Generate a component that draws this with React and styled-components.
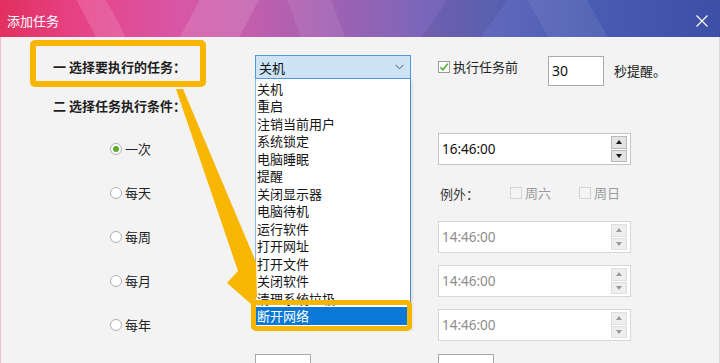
import React from 'react';
import styled, { createGlobalStyle } from 'styled-components';

const Global = createGlobalStyle`
  html, body { margin: 0; padding: 0; width: 720px; height: 363px; overflow: hidden; background: #f3f3f3; }
  body { font-family: "Noto Sans CJK SC", "Noto Sans", sans-serif; -webkit-font-smoothing: antialiased; }
  #root { width: 720px; height: 363px; }
  * { box-sizing: border-box; }
`;

const Dialog = styled.div`
  position: relative;
  width: 720px;
  height: 363px;
  overflow: hidden;
  background: #f3f3f3;
  display: flex;
  flex-direction: column;
`;

const TitleBar = styled.div`
  height: 37px;
  flex: none;
  display: flex;
  align-items: center;
  justify-content: space-between;
  padding: 4px 12px 0 7px;
  background:
    linear-gradient(62deg, rgba(255,255,255,0) 0 13%, rgba(255,255,255,0.13) 13% 17%, rgba(255,255,255,0) 17%),
    linear-gradient(118deg, rgba(255,255,255,0) 0 27%, rgba(255,255,255,0.12) 27% 35%, rgba(255,255,255,0) 35%),
    linear-gradient(70deg, rgba(255,255,255,0) 0 41%, rgba(255,255,255,0.08) 41% 47%, rgba(255,255,255,0) 47%),
    linear-gradient(125deg, rgba(0,0,40,0) 0 60%, rgba(0,0,40,0.08) 60% 68%, rgba(0,0,40,0) 68%),
    linear-gradient(60deg, rgba(255,255,255,0) 0 74%, rgba(255,255,255,0.07) 74% 82%, rgba(255,255,255,0) 82%),
    linear-gradient(90deg, #e2305f 0%, #e6448a 12%, #d757a6 25%, #c25fae 35%, #9e61b3 47%, #7d66b9 58%, #5f68bb 69%, #4a5cb2 82%, #3c4ea6 100%);
`;

const Title = styled.span`
  color: #fff;
  font-size: 13px;
  line-height: 18px;
`;

const CloseIcon = styled.svg`
  width: 12px;
  height: 12px;
  display: block;
`;

const Body = styled.div`
  flex: 1;
  border-left: 1px solid #ecbfd0;
  border-right: 1px solid #dadada;
  padding-top: 18px;
`;

const Row = styled.div`
  display: grid;
  grid-template-columns: 254px 183px 1fr;
  align-items: ${p => p.$align || 'center'};
  height: ${p => p.$h}px;
`;

const SectionTitle = styled.div`
  padding-left: 52px;
  font-size: 13px;
  font-weight: 700;
  color: #1e1e1e;
  line-height: ${p => p.$lh || 24}px;
  margin-top: ${p => p.$mt || 0}px;
  white-space: nowrap;
`;

const SelectWrap = styled.div`
  position: relative;
  width: 156px;
  height: 24px;
`;

const SelectHead = styled.div`
  height: 24px;
  border: 1px solid #5596d6;
  background: #cde4f7;
  display: flex;
  align-items: center;
  justify-content: space-between;
  padding: 0 6px 0 3px;
  font-size: 13px;
  color: #111;
`;

const DropList = styled.div`
  position: absolute;
  top: 100%;
  left: 0;
  width: 156px;
  background: #fff;
  border-left: 1px solid #8dbbe6;
  border-right: 1px solid #4a8fd4;
  border-bottom: 1px solid #8dbbe6;
  padding: 0.5px 0 2px;
  z-index: 2;
  box-shadow: 2px 2px 2px rgba(0,0,0,0.08);
`;

const DropItem = styled.div`
  height: 17.5px;
  line-height: 17.5px;
  font-size: 13px;
  padding-left: ${p => (p.$selected ? 1 : 1)}px;
  margin-right: ${p => (p.$selected ? 3 : 0)}px;
  color: ${p => (p.$selected ? '#fff' : '#161616')};
  background: ${p => (p.$selected ? '#0a78d6' : 'transparent')};
  white-space: nowrap;
`;

const Right = styled.div`
  display: flex;
  align-items: ${p => p.$align || 'center'};
`;

const CheckBox = styled.span`
  width: 12px;
  height: 12px;
  flex: none;
  border: 1px solid ${p => (p.$disabled ? '#d3d3d3' : '#9a9a9a')};
  background: ${p => (p.$disabled ? '#f4f4f4' : '#fff')};
  display: inline-flex;
  align-items: center;
  justify-content: center;
`;

const CheckText = styled.span`
  font-size: 13px;
  line-height: 24px;
  margin-left: 3px;
  color: ${p => (p.$disabled ? '#9b9b9b' : '#222')};
`;

const PlainText = styled.span`
  font-size: 13px;
  line-height: 24px;
  color: #222;
  margin-left: ${p => p.$ml || 0}px;
  margin-top: ${p => p.$mt || 0}px;
`;

const NumBox = styled.div`
  width: 56px;
  height: ${p => p.$h || 30}px;
  margin-left: ${p => p.$ml || 0}px;
  margin-top: ${p => p.$mt || 0}px;
  border: 1px solid #a9a9a9;
  background: #fff;
  font-family: "Noto Sans", sans-serif;
  font-size: 14px;
  line-height: 28px;
  padding-left: 3px;
  color: #111;
`;

const Options = styled.div`
  display: grid;
  grid-template-columns: 254px 183px 1fr;
  grid-auto-rows: 32px;
  row-gap: 12px;
  align-items: center;
  margin-top: 17px;
`;

const RadioLabel = styled.div`
  padding-left: 109px;
  display: flex;
  align-items: center;
  font-size: 13px;
  color: #222;
  line-height: 20px;
`;

const RadioCircle = styled.span`
  width: 12px;
  height: 12px;
  border-radius: 50%;
  border: 1px solid #b0b0b0;
  background: #fff;
  margin-right: 3px;
  display: inline-flex;
  align-items: center;
  justify-content: center;
  &::after {
    content: '';
    display: ${p => (p.$checked ? 'block' : 'none')};
    width: 6px;
    height: 6px;
    border-radius: 50%;
    background: #5bab2c;
  }
`;

const TimeBox = styled.div`
  width: 193px;
  height: 32px;
  border: 1px solid ${p => (p.$disabled ? '#d6d6d6' : '#c4c4c4')};
  background: #fff;
  display: flex;
  align-items: center;
  padding: 0 2px 0 3px;
`;

const TimeText = styled.span`
  flex: 1;
  font-family: "Noto Sans", sans-serif;
  font-size: 13.5px;
  color: ${p => (p.$disabled ? '#8c8c8c' : '#111')};
`;

const Spinner = styled.div`
  display: flex;
  flex-direction: column;
  gap: 1px;
  margin-right: 1px;
`;

const SpinBtn = styled.div`
  width: 16px;
  height: 12.5px;
  background: ${p => (p.$disabled ? '#eeeeee' : '#e4e4e4')};
  border: 1px solid ${p => (p.$disabled ? '#dedede' : '#b9b9b9')};
  display: flex;
  align-items: center;
  justify-content: center;
  &::after {
    content: '';
    width: 0;
    height: 0;
    border-left: 3.5px solid transparent;
    border-right: 3.5px solid transparent;
    ${p => (p.$down ? 'border-top' : 'border-bottom')}: 4px solid ${p => (p.$disabled ? '#9a9a9a' : '#1a1a1a')};
  }
`;

const ExceptLabel = styled.span`
  font-size: 13px;
  color: #3a3a3a;
  margin-left: 2px;
  width: 70px;
`;

const ExceptItem = styled.span`
  display: inline-flex;
  align-items: center;
  margin-right: ${p => p.$mr || 0}px;
`;

const Highlight = styled.div`
  position: absolute;
  left: ${p => p.$x}px;
  top: ${p => p.$y}px;
  width: ${p => p.$w}px;
  height: ${p => p.$h}px;
  border: ${p => p.$b}px solid #f8b600;
  border-radius: 5px;
  pointer-events: none;
  z-index: 3;
`;

const ArrowLayer = styled.svg`
  position: absolute;
  left: 0;
  top: 0;
  width: 720px;
  height: 363px;
  pointer-events: none;
  z-index: 3;
`;

const tasks = ['关机', '重启', '注销当前用户', '系统锁定', '电脑睡眠', '提醒', '关闭显示器', '电脑待机', '运行软件', '打开网址', '打开文件', '关闭软件', '清理系统垃圾', '断开网络'];

function Time({ value, disabled }) {
  return (
    <TimeBox $disabled={disabled}>
      <TimeText $disabled={disabled}>{value}</TimeText>
      <Spinner>
        <SpinBtn $disabled={disabled} />
        <SpinBtn $disabled={disabled} $down />
      </Spinner>
    </TimeBox>
  );
}

function Radio({ label, checked }) {
  return (
    <RadioLabel>
      <RadioCircle $checked={checked} />
      {label}
    </RadioLabel>
  );
}

export default function App() {
  return (
    <>
      <Global />
      <Dialog>
        <TitleBar>
          <Title>添加任务</Title>
          <CloseIcon viewBox="0 0 12 12">
            <path d="M0.5 0.5 L11.5 11.5 M11.5 0.5 L0.5 11.5" stroke="#fff" strokeWidth="1.2" fill="none" />
          </CloseIcon>
        </TitleBar>
        <Body>
          <Row $h={32} $align="start">
            <SectionTitle>一 选择要执行的任务：</SectionTitle>
            <SelectWrap>
              <SelectHead>
                <span>关机</span>
                <svg width="9" height="6" viewBox="0 0 9 6">
                  <path d="M0.5 0.8 L4.5 4.8 L8.5 0.8" stroke="#555" strokeWidth="1" fill="none" />
                </svg>
              </SelectHead>
              <DropList>
                {tasks.map((t, i) => (
                  <DropItem key={t} $selected={i === tasks.length - 1}>{t}</DropItem>
                ))}
              </DropList>
            </SelectWrap>
            <Right $align="flex-start">
              <ExceptItem style={{ height: 24 }}>
                <CheckBox>
                  <svg width="10" height="10" viewBox="0 0 10 10">
                    <path d="M1.3 5.2 L3.9 7.8 L8.8 1.6" stroke="#4fa82b" strokeWidth="1.5" fill="none" />
                  </svg>
                </CheckBox>
                <CheckText>执行任务前</CheckText>
              </ExceptItem>
              <NumBox $ml={30} $mt={1}>30</NumBox>
              <PlainText $ml={10} $mt={4}>秒提醒。</PlainText>
            </Right>
          </Row>
          <SectionTitle $lh={20} $mt={9}>二 选择任务执行条件：</SectionTitle>
          <Options>
            <Radio label="一次" checked />
            <span />
            <Time value="16:46:00" />

            <Radio label="每天" />
            <span />
            <Right>
              <ExceptLabel>例外：</ExceptLabel>
              <ExceptItem $mr={28}>
                <CheckBox $disabled />
                <CheckText $disabled>周六</CheckText>
              </ExceptItem>
              <ExceptItem>
                <CheckBox $disabled />
                <CheckText $disabled>周日</CheckText>
              </ExceptItem>
            </Right>

            <Radio label="每周" />
            <span />
            <Time value="14:46:00" disabled />

            <Radio label="每月" />
            <span />
            <Time value="14:46:00" disabled />

            <Radio label="每年" />
            <span />
            <Time value="14:46:00" disabled />

            <Radio label="现在开始等待" />
            <Right>
              <NumBox $h={30}>0</NumBox>
              <PlainText $ml={24}>小时</PlainText>
            </Right>
            <Right>
              <NumBox $h={30}>0</NumBox>
              <PlainText $ml={24}>分钟</PlainText>
            </Right>
          </Options>
        </Body>
        <Highlight $x={30} $y={40} $w={176} $h={47} $b={6} />
        <Highlight $x={251} $y={300} $w={161} $h={31} $b={5} />
        <ArrowLayer viewBox="0 0 720 363">
          <polygon points="176,89 183,89 256,262 257,297 251,304 227,283 238,271" fill="#f8b600" />
        </ArrowLayer>
      </Dialog>
    </>
  );
}
